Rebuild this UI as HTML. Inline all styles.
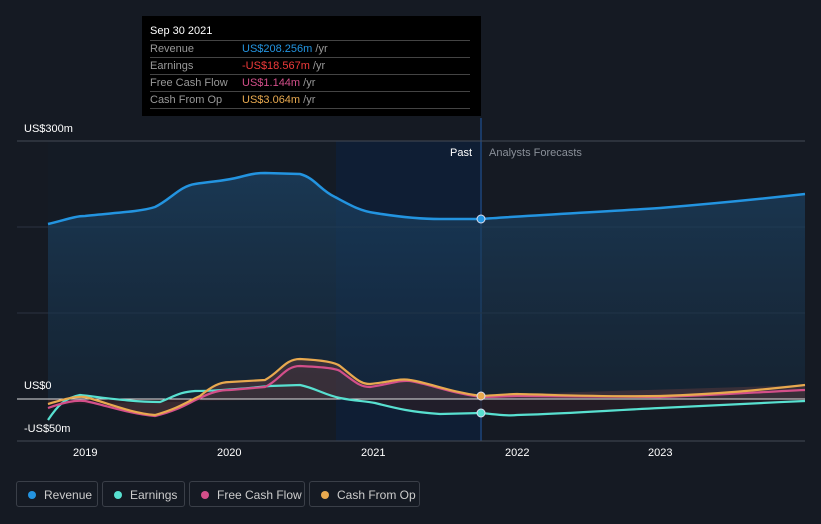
<!DOCTYPE html>
<html><head><meta charset="utf-8"><style>
body{margin:0;width:821px;height:524px;background:#151a23;font-family:"Liberation Sans",sans-serif;overflow:hidden;position:relative}
.tt{position:absolute;left:142px;top:16px;width:339px;height:100px;background:#000}
.tt .h{position:absolute;left:8px;top:9px;color:#fff;font-size:11px}
.row{position:absolute;left:8px;width:320px;height:16px;border-top:1px solid #444;font-size:11px;color:#999;line-height:16px}
.row span.v{position:absolute;left:92px}
.lg{position:absolute;top:481px;height:26px;border:1px solid #3a3f48;border-radius:3px;color:#ccc;font-size:12px;line-height:26px;box-sizing:border-box}
.lg i{position:absolute;left:11px;top:9px;width:8px;height:8px;border-radius:50%}
.lg span{position:absolute;left:27px}
.ax{position:absolute;color:#fff;font-size:11px}
</style></head><body>
<svg width="821" height="524" style="position:absolute;left:0;top:0">
<defs>
<linearGradient id="rf" x1="0" y1="0" x2="0" y2="1"><stop offset="0" stop-color="#1c4467" stop-opacity=".7"/><stop offset="1" stop-color="#172c40" stop-opacity=".5"/></linearGradient>
</defs>
<rect x="48" y="141" width="433" height="300" fill="#141b25"/>
<rect x="336" y="141" width="145" height="300" fill="#0f1e34"/>
<rect x="480" y="118" width="2" height="323" fill="#1a3a66"/>
<line x1="17" y1="141" x2="805" y2="141" stroke="#444a55"/>
<line x1="17" y1="227" x2="805" y2="227" stroke="#2a3340"/>
<line x1="17" y1="313" x2="805" y2="313" stroke="#2a3340"/>
<line x1="17" y1="441" x2="805" y2="441" stroke="#444a55"/>
<path d="M48,224 C65,220 75,216 85,216 C110,213 140,212 155,207 C170,200 180,186 195,184 C215,181 225,181 240,177 C255,173 260,173 265,173 L300,174 C315,178 320,190 335,197 C350,205 360,211 375,213 C400,217 420,219 440,219 L481,219 C520,216 600,212 660,208 C720,203 760,199 805,194 L805,399 L48,399 Z" fill="url(#rf)"/>
<path d="M48,404 C70,398 80,395 90,398 C110,406 130,414 155,415 C180,410 195,398 200,396 C210,385 220,382 230,382 L265,380 C280,372 285,359 300,359 C320,360 335,362 340,366 C355,378 360,384 370,384 C390,382 400,378 410,380 C430,383 450,392 481,396 L517,394 L805,385 L805,399 L48,399Z" fill="#5a3a3d" opacity=".5"/>
<path d="M48,399 L805,399 L805,401 C760,403 720,405 660,408 C600,411 560,414 517,415 L481,413 C440,414 410,412 375,403 L340,398 L48,405Z" fill="#2a1e26" opacity=".7"/>
<path d="M48,224 C65,220 75,216 85,216 C110,213 140,212 155,207 C170,200 180,186 195,184 C215,181 225,181 240,177 C255,173 260,173 265,173 L300,174 C315,178 320,190 335,197 C350,205 360,211 375,213 C400,217 420,219 440,219 L481,219 C520,216 600,212 660,208 C720,203 760,199 805,194" fill="none" stroke="#2394e0" stroke-width="2.5"/>
<line x1="17" y1="399" x2="805" y2="399" stroke="#e0e0e0" stroke-width="1"/>
<path d="M48,420 C58,405 65,398 80,395 C100,397 130,402 160,402 C175,396 180,392 195,391 C210,391 230,390 270,386 L300,385 C315,388 325,395 340,398 C355,401 365,401 375,403 C395,408 410,412 440,414 L481,413 C500,415 510,416 517,415 C560,414 600,411 660,408 C720,405 760,403 805,401" fill="none" stroke="#58e0d0" stroke-width="2.2"/>
<path d="M48,408 C65,402 75,400 85,401 C105,405 130,414 155,416 C180,410 190,402 200,398 C212,392 220,390 230,390 L265,387 C280,380 285,366 300,366 C320,367 335,368 340,371 C355,382 360,387 370,387 C390,384 400,380 410,381 C430,384 450,393 481,397 C500,397 510,396 517,396 L660,397 C720,395 760,392 805,390" fill="none" stroke="#d34f8a" stroke-width="2.2"/>
<path d="M48,404 C65,399 75,396 85,397 C105,402 130,413 155,415 C180,408 190,400 200,396 C212,386 220,382 230,382 L265,380 C280,372 285,359 300,359 C320,360 335,362 340,366 C355,378 360,384 370,384 C390,382 400,378 410,380 C430,383 450,392 481,396 C500,395 510,394 517,394 C560,395 600,397 660,396 C720,394 760,390 805,385" fill="none" stroke="#e8a94f" stroke-width="2.2"/>
<circle cx="481" cy="219" r="4" fill="#2394e0" stroke="#dde" stroke-width="1"/>
<circle cx="481" cy="413" r="4" fill="#58e0d0" stroke="#dde" stroke-width="1"/>
<circle cx="481" cy="396" r="4" fill="#e8a94f" stroke="#dde" stroke-width="1"/>
</svg>
<div class="tt"><div class="h">Sep 30 2021</div>
<div class="row" style="top:24px">Revenue<span class="v"><b style="font-weight:normal;color:#2394e0">US$208.256m</b> /yr</span></div>
<div class="row" style="top:41px">Earnings<span class="v"><b style="font-weight:normal;color:#f03a3a">-US$18.567m</b> /yr</span></div>
<div class="row" style="top:58px">Free Cash Flow<span class="v"><b style="font-weight:normal;color:#d34f8a">US$1.144m</b> /yr</span></div>
<div class="row" style="top:75px">Cash From Op<span class="v"><b style="font-weight:normal;color:#e8a94f">US$3.064m</b> /yr</span></div>
<div class="row" style="top:92px;height:0"></div>
</div>
<div class="ax" style="left:24px;top:123px">US$300m</div>
<div class="ax" style="left:24px;top:380px">US$0</div>
<div class="ax" style="left:24px;top:423px">-US$50m</div>
<div class="ax" style="left:450px;top:147px">Past</div>
<div class="ax" style="left:489px;top:147px;color:#8a9099">Analysts Forecasts</div>
<div class="ax" style="left:73px;top:447px">2019</div>
<div class="ax" style="left:217px;top:447px">2020</div>
<div class="ax" style="left:361px;top:447px">2021</div>
<div class="ax" style="left:505px;top:447px">2022</div>
<div class="ax" style="left:648px;top:447px">2023</div>
<div class="lg" style="left:16px;width:82px"><i style="background:#2394e0"></i><span>Revenue</span></div>
<div class="lg" style="left:102px;width:83px"><i style="background:#58e0d0"></i><span>Earnings</span></div>
<div class="lg" style="left:189px;width:116px"><i style="background:#d34f8a"></i><span>Free Cash Flow</span></div>
<div class="lg" style="left:309px;width:111px"><i style="background:#e8a94f"></i><span>Cash From Op</span></div>
</body></html>
